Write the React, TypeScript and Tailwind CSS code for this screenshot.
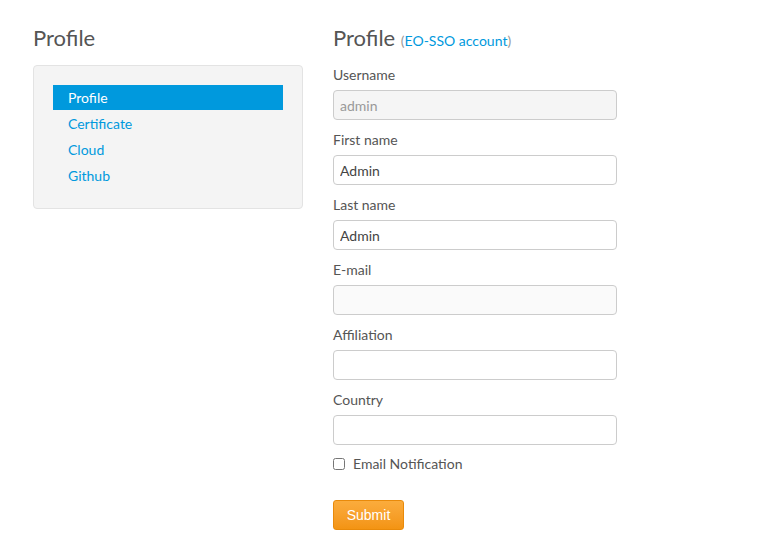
import { useState } from 'react';

const fields = [
  { label: 'Username', value: 'admin', disabled: true },
  { label: 'First name', value: 'Admin' },
  { label: 'Last name', value: 'Admin' },
  { label: 'E-mail', value: '', tint: true },
  { label: 'Affiliation', value: '' },
  { label: 'Country', value: '' },
];

const menu = ['Profile', 'Certificate', 'Cloud', 'Github'];

export default function App() {
  const [active, setActive] = useState(0);

  return (
    <div className="min-h-[544px] bg-white font-['Lato','Liberation_Sans',sans-serif] text-[14px] text-[#555]">
      <div className="flex gap-[30px] pl-[33px] pt-[23px]">
        {/* Sidebar */}
        <div className="w-[270px]">
          <h2 className="text-[22px] leading-[30px] text-[#555]">Profile</h2>
          <div className="mt-[12px] rounded-[4px] border border-[#e3e3e3] bg-[#f4f4f4] px-[19px] pb-[20px] pt-[19px]">
            <ul className="flex flex-col gap-[1px]">
              {menu.map((item, i) => (
                <li key={item}>
                  <a
                    href="#"
                    onClick={(e) => {
                      e.preventDefault();
                      setActive(i);
                    }}
                    className={`block h-[25px] px-[15px] leading-[25px] ${
                      i === active ? 'bg-[#0099dd] text-white' : 'text-[#0099dd]'
                    }`}
                  >
                    {item}
                  </a>
                </li>
              ))}
            </ul>
          </div>
        </div>

        {/* Form */}
        <div className="w-[284px]">
          <h2 className="text-[22px] leading-[30px] text-[#555]">
            Profile{' '}
            <span className="text-[14px] text-[#999]">
              (<a href="#" className="text-[#0099dd]">EO-SSO account</a>)
            </span>
          </h2>
          <form className="mt-[9px] flex flex-col gap-[10px]" onSubmit={(e) => e.preventDefault()}>
            {fields.map((f) => (
              <div key={f.label} className="flex flex-col gap-[6px]">
                <label className="leading-[19px]">{f.label}</label>
                <input
                  defaultValue={f.value}
                  disabled={f.disabled}
                  className={`h-[30px] w-full rounded-[4px] border border-[#ccc] px-[6px] text-[14px] font-normal outline-none ${
                    f.disabled
                      ? 'bg-[#f5f5f5] text-[#999]'
                      : f.tint
                        ? 'bg-[#fafafa] text-[#444]'
                        : 'bg-white text-[#444]'
                  }`}
                />
              </div>
            ))}
            <label className="mt-[-1px] flex items-center gap-[8px] leading-[20px]">
              <input type="checkbox" className="m-0 h-[12px] w-[12px]" />
              Email Notification
            </label>
            <div className="mt-[16px]">
              <button
                type="submit"
                className="h-[30px] w-[71px] rounded-[3px] border border-[#e98a0a] bg-gradient-to-b from-[#fbac3c] to-[#f39412] font-['Liberation_Sans',Arial,sans-serif] text-[14px] text-white"
              >
                Submit
              </button>
            </div>
          </form>
        </div>
      </div>
    </div>
  );
}
